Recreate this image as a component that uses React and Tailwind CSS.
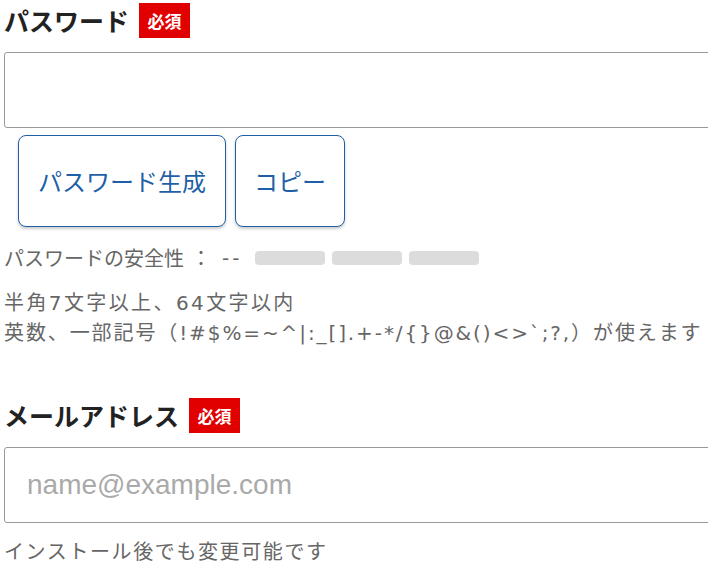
const JP = "font-['Noto_Sans_CJK_JP','Noto_Sans',sans-serif]"
const NOTE = "font-['DejaVu_Sans','Noto_Sans_CJK_JP',sans-serif]"

function Required() {
  return (
    <span className="inline-flex items-center justify-center w-[51px] h-[35px] bg-[#e00000] text-white text-[17px] font-bold leading-none">
      必須
    </span>
  )
}

function FieldTitle({ children }) {
  return (
    <div className="flex items-center gap-[10px]">
      <h3 className="text-[25px] font-bold text-[#222] leading-none">{children}</h3>
      <Required />
    </div>
  )
}

export default function App() {
  return (
    <div className={`w-[708px] h-[563px] overflow-hidden bg-white pl-[4px] pt-[3px] ${JP}`}>
      <FieldTitle>パスワード</FieldTitle>

      <input
        type="password"
        className="block mt-[14px] w-[760px] h-[76px] border border-[#999] rounded-[3px] bg-white outline-none"
      />

      <div className="flex gap-[9px] mt-[7px] ml-[14px]">
        <button className="h-[92px] px-[19px] border border-[#1f5fa6] rounded-[8px] bg-white text-[#1f5fa6] text-[24px] shadow-[0_2px_3px_rgba(0,0,0,0.2)]">
          パスワード生成
        </button>
        <button className="h-[92px] px-[18px] border border-[#1f5fa6] rounded-[8px] bg-white text-[#1f5fa6] text-[24px] shadow-[0_2px_3px_rgba(0,0,0,0.2)]">
          コピー
        </button>
      </div>

      <div className="flex items-center mt-[16px] h-[30px] text-[20px] text-[#666]">
        <span>パスワードの安全性</span>
        <span className="w-[34px] text-center">：</span>
        <span className={`${NOTE} ml-[4px] tracking-[3px]`}>--</span>
        <div className="flex gap-[7px] ml-[13px]">
          <span className="w-[70px] h-[14px] rounded-[4px] bg-[#dcdcdc]" />
          <span className="w-[70px] h-[14px] rounded-[4px] bg-[#dcdcdc]" />
          <span className="w-[70px] h-[14px] rounded-[4px] bg-[#dcdcdc]" />
        </div>
      </div>

      <div className={`mt-[15px] text-[20px] leading-[30px] text-[#666] whitespace-nowrap ${NOTE}`}>
        <p className="tracking-[2.4px]">半角7文字以上、64文字以内</p>
        <p className="tracking-[1.9px]">英数、一部記号（!#$%=~^|:_[].+-*/{'{'}{'}'}@&amp;()&lt;&gt;`;?,）が使えます</p>
      </div>

      <div className="mt-[50px]">
        <FieldTitle>メールアドレス</FieldTitle>
      </div>

      <input
        type="email"
        placeholder="name@example.com"
        className="block mt-[14px] w-[760px] h-[76px] border border-[#999] rounded-[3px] bg-white outline-none pl-[22px] text-[28px] font-['Liberation_Sans',Arial,sans-serif] placeholder:text-[#aaa]"
      />

      <p className="mt-[15px] text-[20px] leading-[26px] text-[#666] tracking-[1.6px]">インストール後でも変更可能です</p>
    </div>
  )
}
